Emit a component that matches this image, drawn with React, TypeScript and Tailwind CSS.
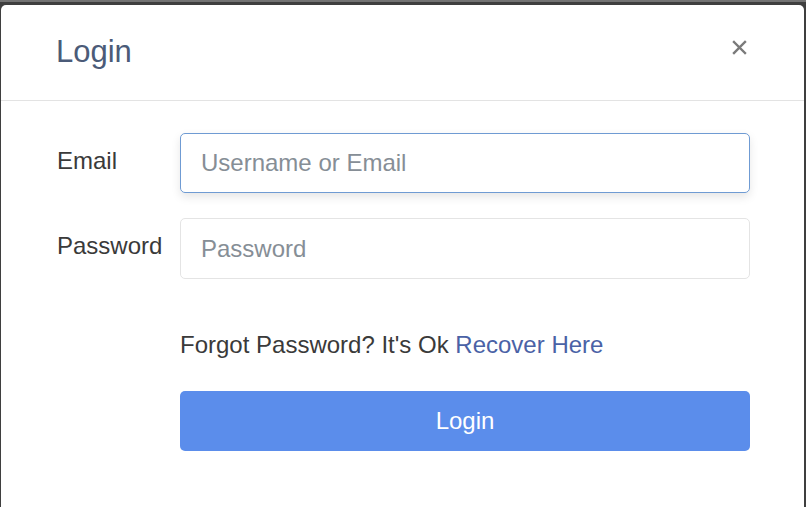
import React from "react";

export default function App() {
  return (
    <div
      className="w-[806px] h-[507px] overflow-hidden bg-[#3f3f3f] border-t-2 border-[#737373] pt-[3px] pl-[1px]"
      style={{ fontFamily: '"Liberation Sans", Arial, sans-serif' }}
    >
      <div className="w-[803px] h-[520px] bg-white rounded-[5px]">
        {/* header */}
        <div className="h-[96px] border-b border-[#e3e3e3] flex items-center justify-between pl-[55px] pr-[57px]">
          <h4 className="text-[31px] leading-none text-[#4b5b78] -mt-[2px]">Login</h4>
          <button className="text-[#7a7a7a] -mt-[10px]">
            <svg width="15" height="15" viewBox="0 0 15 15">
              <path d="M2 2 L13 13 M13 2 L2 13" stroke="currentColor" strokeWidth="2.4" strokeLinecap="square" />
            </svg>
          </button>
        </div>

        {/* body */}
        <div className="pt-[32px] pl-[56px] pr-[54px]">
          <div className="flex items-center mb-[25px]">
            <label className="w-[123px] text-[24px] text-[#3a3a3a] -mt-[5px]">Email</label>
            <input
              className="w-[570px] h-[60px] rounded-[5px] border border-[#6f9bd3] px-[20px] text-[24px] text-[#333] placeholder:text-[#868e96] outline-none shadow-[0_4px_10px_rgba(0,0,0,0.1)]"
              placeholder="Username or Email"
            />
          </div>
          <div className="flex items-center">
            <label className="w-[123px] text-[24px] text-[#3a3a3a] -mt-[5px]">Password</label>
            <input
              type="password"
              className="w-[570px] h-[61px] rounded-[5px] border border-[#e4e4e4] px-[20px] text-[24px] text-[#333] placeholder:text-[#868e96] outline-none"
              placeholder="Password"
            />
          </div>

          <div className="pl-[123px]">
            <p className="mt-[50px] text-[24px] leading-[32px] text-[#3a3a3a]">
              Forgot Password? It's Ok <a className="text-[#4a62a6]">Recover Here</a>
            </p>
            <button className="mt-[30px] w-[570px] h-[60px] rounded-[5px] bg-[#5b8deb] text-white text-[24px]">
              Login
            </button>
          </div>
        </div>
      </div>
    </div>
  );
}
